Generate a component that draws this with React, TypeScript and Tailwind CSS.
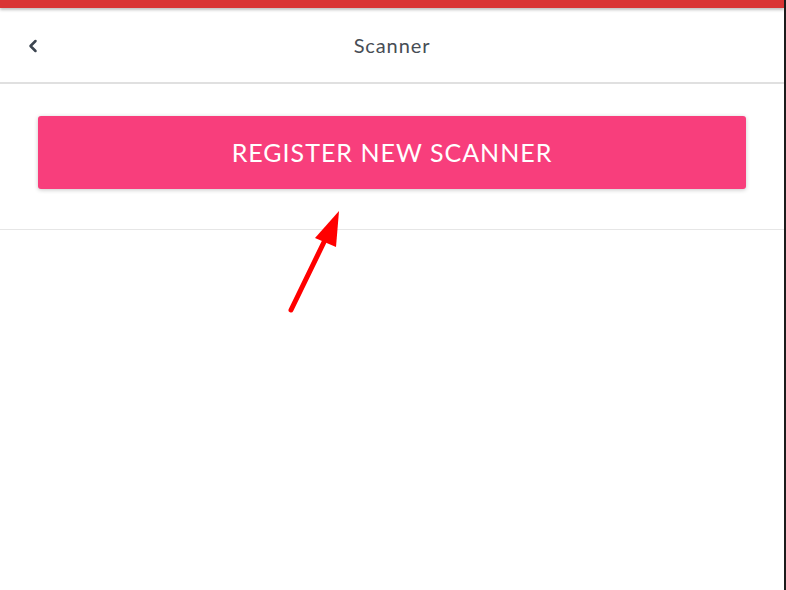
import { ChevronLeft } from "lucide-react";

export default function App() {
  return (
    <div
      className="h-[590px] w-[786px] bg-white flex flex-col border-r-2 border-[#1c1c1c] overflow-hidden"
      style={{ fontFamily: "Lato, 'Open Sans', sans-serif" }}
    >
      <div className="h-[8px] bg-[#d93434] shadow-[0_2px_3px_rgba(0,0,0,0.25)] relative z-10" />
      <header className="h-[76px] flex items-center relative border-b-2 border-[#e0e0e0]">
        <button className="absolute left-[23px] top-[28px] text-[#3c4550]">
          <ChevronLeft size={20} strokeWidth={3} />
        </button>
        <h1 className="w-full text-center text-[20px] text-[#474d55] tracking-[0.9px]">Scanner</h1>
      </header>

      <section className="px-[38px] pt-[32px] pb-[40px] border-b border-[#e6e6e6] relative">
        <button className="w-full h-[73px] rounded-[3px] bg-[#f83e7c] text-white text-[25px] tracking-[1px] shadow-[0_1px_4px_rgba(0,0,0,0.22)]">
          REGISTER NEW SCANNER
        </button>
      </section>

      <svg className="absolute left-0 top-0 pointer-events-none" width="786" height="590">
        <line x1="291" y1="310" x2="325" y2="240" stroke="#ff0000" strokeWidth="5" strokeLinecap="round" />
        <polygon points="339,211 336,247 315,238" fill="#ff0000" />
      </svg>
    </div>
  );
}
